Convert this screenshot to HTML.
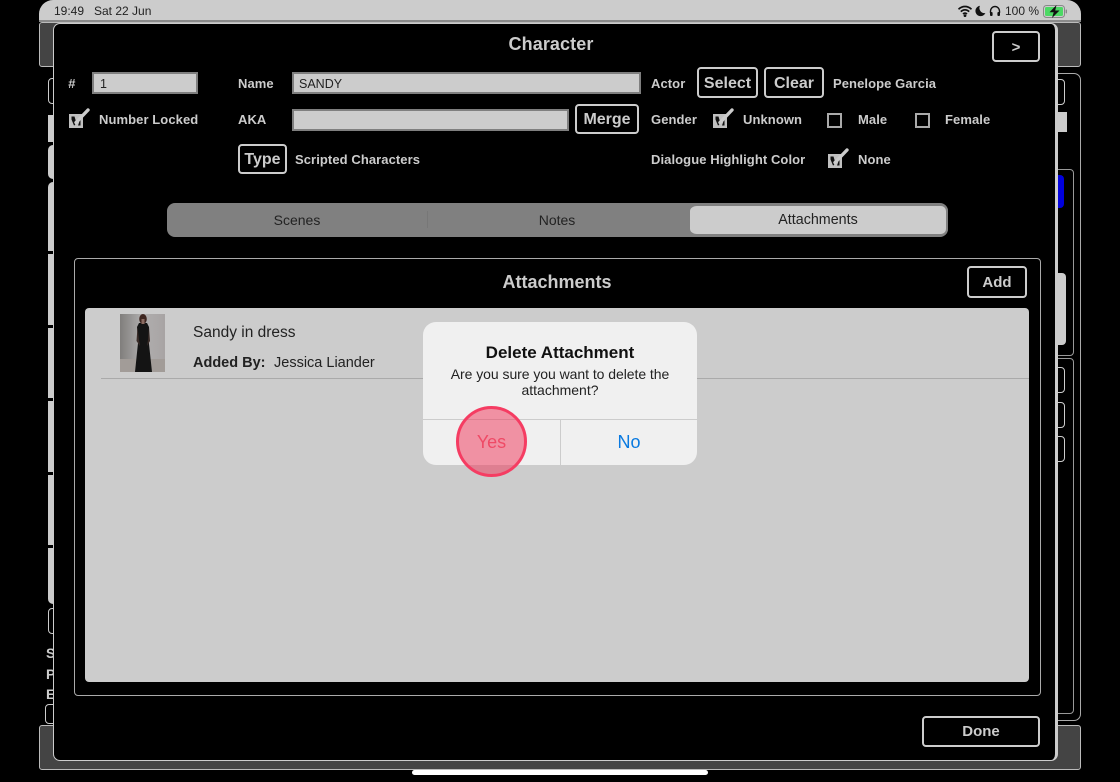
<!DOCTYPE html>
<html>
<head>
<meta charset="utf-8">
<style>
html,body{margin:0;padding:0;background:#000;}
body{width:1120px;height:782px;position:relative;overflow:hidden;font-family:"Liberation Sans",sans-serif;color:#ccc;}
.a{position:absolute;box-sizing:border-box;}
.t{position:absolute;white-space:nowrap;line-height:1;}
.b{font-weight:bold;font-size:13px;color:#ccc;letter-spacing:.08px;}
.btn{position:absolute;box-sizing:border-box;border:2px solid #ccc;border-radius:4px;background:#000;color:#ccc;font-weight:bold;font-size:16px;text-align:center;}
.inp{position:absolute;box-sizing:border-box;background:#ccc;border:2px solid #7f7f7f;color:#222;font-size:12.5px;line-height:20px;padding-left:5px;}
.chk{position:absolute;width:23px;height:23px;}
.box{position:absolute;box-sizing:border-box;width:15px;height:15px;border:2.5px solid #aaa;background:#000;}
</style>
</head>
<body>
<!-- status bar -->
<div class="a" style="left:39px;top:0;width:1042px;height:20px;background:#ccc;border-radius:14px 14px 0 0;"></div>
<div class="a" style="left:39px;top:20px;width:1042px;height:2px;background:#8a8a8a;"></div>
<div class="t" style="left:54px;top:5px;font-size:12px;color:#222;">19:49</div>
<div class="t" style="left:94px;top:5px;font-size:12px;color:#222;">Sat 22 Jun</div>
<svg class="a" style="left:957px;top:4px;" width="16" height="14" viewBox="0 0 16 14"><path d="M1.5 5.2C5.5 1.6 10.5 1.6 14.5 5.2M3.8 7.6C6.4 5.3 9.6 5.3 12.2 7.6M6 10C7.2 9 8.8 9 10 10" stroke="#111" stroke-width="1.7" fill="none"/><circle cx="8" cy="11.6" r="1.4" fill="#111"/></svg>
<svg class="a" style="left:975px;top:5px;" width="11" height="12" viewBox="0 0 11 12"><path d="M5 .8A5.2 5.2 0 1 0 10.400 8 5 5 0 0 1 5 .8Z" fill="#111"/></svg>
<svg class="a" style="left:989px;top:5px;" width="12" height="12" viewBox="0 0 12 12"><path d="M1.500 8V6a4.500 4.500 0 0 1 9 0v2" stroke="#111" stroke-width="1.400" fill="none"/><rect x="1" y="7" width="2.600" height="4" rx="1" fill="#111"/><rect x="8.400" y="7" width="2.600" height="4" rx="1" fill="#111"/></svg>
<div class="t" style="left:1005px;top:5px;font-size:12px;color:#222;">100 %</div>
<svg class="a" style="left:1043px;top:5px;" width="25" height="13" viewBox="0 0 25 13"><rect x=".5" y=".5" width="21" height="12" rx="3" fill="none" stroke="#888"/><rect x="2" y="2" width="18" height="9" rx="1.500" fill="#4cd964"/><rect x="22.600" y="4.500" width="1.400" height="4" rx=".7" fill="#888"/><path d="M13.500 0 6.500 7.300h4.200L9 13l7.500-7.500h-4.300z" fill="#111"/></svg>

<!-- background layer -->
<div class="a" style="left:39px;top:22px;width:1042px;height:45px;background:#444;border:1.5px solid #bbb;border-radius:3px;"></div>
<div class="a" style="left:39px;top:725px;width:1042px;height:45px;background:#444;border:1.5px solid #bbb;border-radius:3px;"></div>
<div class="a" style="left:48px;top:78px;width:14px;height:26px;border:1.5px solid #ccc;border-radius:4px;"></div>
<div class="a" style="left:48px;top:115px;width:10px;height:27px;background:#ccc;"></div>
<div class="a" style="left:48px;top:145px;width:10px;height:34px;background:#ccc;border-radius:5px;"></div>
<div class="a" style="left:48px;top:182px;width:10px;height:422px;background:#ccc;border-radius:5px;"></div>
<div class="a" style="left:48px;top:251px;width:5px;height:3px;background:#000;"></div>
<div class="a" style="left:48px;top:325px;width:5px;height:3px;background:#000;"></div>
<div class="a" style="left:48px;top:398px;width:5px;height:3px;background:#000;"></div>
<div class="a" style="left:48px;top:472px;width:5px;height:3px;background:#000;"></div>
<div class="a" style="left:48px;top:545px;width:5px;height:3px;background:#000;"></div>
<div class="a" style="left:48px;top:608px;width:14px;height:26px;border:1.5px solid #ccc;border-radius:4px;"></div>
<div class="t" style="left:46px;top:646px;font-size:14px;font-weight:bold;">S</div>
<div class="t" style="left:46px;top:667px;font-size:14px;font-weight:bold;">P</div>
<div class="t" style="left:46px;top:687px;font-size:14px;font-weight:bold;">E</div>
<div class="a" style="left:45px;top:704px;width:16px;height:20px;border:1.5px solid #ccc;border-radius:4px;"></div>
<!-- right back -->
<div class="a" style="left:1040px;top:73px;width:41px;height:648px;border:1.5px solid #aaa;border-radius:7px;"></div>
<div class="a" style="left:1040px;top:79px;width:25px;height:26px;border:1.5px solid #ccc;border-radius:4px;"></div>
<div class="a" style="left:1050px;top:112px;width:17px;height:20px;background:#ccc;"></div>
<div class="a" style="left:1040px;top:169px;width:34px;height:187px;border:1px solid #999;border-radius:4px;"></div>
<div class="a" style="left:1050px;top:175px;width:14px;height:33px;background:#00d;border-radius:4px;"></div>
<div class="a" style="left:1050px;top:273px;width:16px;height:72px;background:#ccc;border-radius:4px;"></div>
<div class="a" style="left:1040px;top:358px;width:34px;height:356px;border:1px solid #999;border-radius:4px;"></div>
<div class="a" style="left:1040px;top:367px;width:25px;height:26px;border:1.5px solid #ccc;border-radius:4px;"></div>
<div class="a" style="left:1040px;top:402px;width:25px;height:26px;border:1.5px solid #ccc;border-radius:4px;"></div>
<div class="a" style="left:1040px;top:436px;width:25px;height:26px;border:1.5px solid #ccc;border-radius:4px;"></div>

<!-- main modal -->
<div class="a" style="left:53px;top:23px;width:1005px;height:738px;background:#000;border:1.5px solid #ccc;border-right-width:3px;border-radius:7px;"></div>
<div class="t" style="left:0;top:35px;width:1102px;text-align:center;font-size:18px;font-weight:bold;color:#ccc;letter-spacing:.1px;">Character</div>
<div class="btn" style="left:992px;top:31px;width:48px;height:31px;line-height:29px;font-size:15px;">&gt;</div>

<!-- row 1 -->
<div class="t" style="left:68px;top:77px;font-size:13px;font-weight:bold;font-style:italic;">#</div>
<div class="inp" style="left:92px;top:72px;width:106px;height:22px;padding-left:6px;">1</div>
<div class="t b" style="left:238px;top:77px;">Name</div>
<div class="inp" style="left:292px;top:72px;width:349px;height:22px;padding-left:5px;">SANDY</div>
<div class="t b" style="left:651px;top:77px;">Actor</div>
<div class="btn" style="left:697px;top:67px;width:61px;height:31px;line-height:29px;">Select</div>
<div class="btn" style="left:764px;top:67px;width:60px;height:31px;line-height:29px;">Clear</div>
<div class="t b" style="left:833px;top:77px;">Penelope Garcia</div>

<!-- row 2 -->
<svg class="chk" style="left:68px;top:107px;" viewBox="0 0 23 23"><rect x="1" y="7" width="14" height="14" fill="#c0c0c0"/><path d="M3.500 9.500h3l1.500 5-1 3.500-1 .5-2.500-6zM10 18.500l2.500-7v7z" fill="#111"/><path d="M8 15.500 20 3" stroke="#ccc" stroke-width="3.400" stroke-linecap="round" fill="none"/></svg>
<div class="t b" style="left:99px;top:113px;">Number Locked</div>
<div class="t b" style="left:238px;top:113px;">AKA</div>
<div class="inp" style="left:292px;top:109px;width:277px;height:22px;"></div>
<div class="btn" style="left:575px;top:104px;width:64px;height:30px;line-height:28px;">Merge</div>
<div class="t b" style="left:651px;top:113px;">Gender</div>
<svg class="chk" style="left:712px;top:107px;" viewBox="0 0 23 23"><rect x="1" y="7" width="14" height="14" fill="#c0c0c0"/><path d="M3.500 9.500h3l1.500 5-1 3.500-1 .5-2.500-6zM10 18.500l2.500-7v7z" fill="#111"/><path d="M8 15.500 20 3" stroke="#ccc" stroke-width="3.400" stroke-linecap="round" fill="none"/></svg>
<div class="t b" style="left:743px;top:113px;">Unknown</div>
<div class="box" style="left:827px;top:113px;"></div>
<div class="t b" style="left:858px;top:113px;">Male</div>
<div class="box" style="left:915px;top:113px;"></div>
<div class="t b" style="left:945px;top:113px;">Female</div>

<!-- row 3 -->
<div class="btn" style="left:238px;top:144px;width:49px;height:30px;line-height:28px;">Type</div>
<div class="t b" style="left:295px;top:153px;">Scripted Characters</div>
<div class="t b" style="left:651px;top:153px;">Dialogue Highlight Color</div>
<svg class="chk" style="left:827px;top:147px;" viewBox="0 0 23 23"><rect x="1" y="7" width="14" height="14" fill="#c0c0c0"/><path d="M3.500 9.500h3l1.500 5-1 3.500-1 .5-2.500-6zM10 18.500l2.500-7v7z" fill="#111"/><path d="M8 15.500 20 3" stroke="#ccc" stroke-width="3.400" stroke-linecap="round" fill="none"/></svg>
<div class="t b" style="left:858px;top:153px;">None</div>

<!-- segmented -->
<div class="a" style="left:167px;top:203px;width:781px;height:34px;background:#808080;border-radius:8px;"></div>
<div class="a" style="left:427px;top:211px;width:1px;height:17px;background:#777;"></div>
<div class="a" style="left:690px;top:204px;width:258px;height:32px;background:#ccc;border:2px solid #808080;border-left:0;border-radius:7px;"></div>
<div class="t" style="left:167px;top:213px;width:260px;text-align:center;font-size:14px;line-height:14px;color:#222;">Scenes</div>
<div class="t" style="left:428px;top:213px;width:258px;text-align:center;font-size:14px;line-height:14px;color:#222;">Notes</div>
<div class="t" style="left:689px;top:213px;width:258px;text-align:center;font-size:14.300px;line-height:14px;color:#222;">Attachments</div>

<!-- attachments panel -->
<div class="a" style="left:74px;top:258px;width:967px;height:438px;border:1px solid #aaa;border-radius:4px;"></div>
<div class="t" style="left:74px;top:273px;width:966px;text-align:center;font-size:18px;font-weight:bold;color:#ccc;">Attachments</div>
<div class="btn" style="left:967px;top:266px;width:60px;height:32px;line-height:29px;font-size:15px;">Add</div>
<div class="a" style="left:85px;top:308px;width:944px;height:374px;background:#ccc;border-radius:4px;"></div>
<svg class="a" style="left:120px;top:314px;" width="45" height="58" viewBox="0 0 45 58">
<defs><linearGradient id="bg" x1="0" y1="0" x2="1" y2="0"><stop offset="0" stop-color="#807e7c"/><stop offset=".5" stop-color="#b0aeae"/><stop offset="1" stop-color="#a8a4a4"/></linearGradient></defs>
<rect width="45" height="58" fill="url(#bg)"/><rect y="45" width="45" height="13" fill="#a29c98"/>
<path d="M19 9 17 13 18 29 15 58H32L29 30 29 13 27 9Z" fill="#141414"/>
<path d="M17.500 13 16.500 27 20 32 19 26ZM29 13 30 27 27 32 28 26Z" fill="#3a2c28"/>
<ellipse cx="23" cy="5" rx="3.800" ry="5" fill="#3e2620"/><rect x="21.500" y="5" width="3" height="5" fill="#8a6a60"/>
</svg>
<div class="t" style="left:193px;top:325px;font-size:15.500px;color:#222;">Sandy in dress</div>
<div class="t" style="left:193px;top:356px;font-size:14.500px;font-weight:bold;color:#222;">Added By:</div>
<div class="t" style="left:274px;top:356px;font-size:14.500px;color:#222;">Jessica Liander</div>
<div class="a" style="left:101px;top:378px;width:928px;height:1px;background:#aaa;"></div>

<!-- done -->
<div class="btn" style="left:922px;top:716px;width:118px;height:31px;line-height:28px;font-size:15px;">Done</div>

<!-- alert -->
<div class="a" style="left:423px;top:322px;width:274px;height:143px;background:#f0f0f0;border-radius:13px;"></div>
<div class="t" style="left:423px;top:344px;width:274px;text-align:center;font-size:17px;font-weight:bold;color:#111;">Delete Attachment</div>
<div class="t" style="left:423px;top:367px;width:274px;text-align:center;font-size:14px;letter-spacing:-.05px;color:#222;">Are you sure you want to delete the</div>
<div class="t" style="left:423px;top:383px;width:274px;text-align:center;font-size:14px;color:#222;">attachment?</div>
<div class="a" style="left:423px;top:419px;width:274px;height:1px;background:#ccc;"></div>
<div class="a" style="left:560px;top:420px;width:1px;height:45px;background:#ccc;"></div>
<div class="t" style="left:561px;top:433px;width:136px;text-align:center;font-size:18px;color:#0a7ae0;">No</div>
<div class="a" style="left:456px;top:406px;width:71px;height:71px;border-radius:50%;background:rgba(240,50,85,.5);border:3px solid #f53c62;"></div>
<div class="t" style="left:423px;top:433px;width:137px;text-align:center;font-size:18px;color:#ef4a66;">Yes</div>

<!-- home indicator -->
<div class="a" style="left:412px;top:770px;width:296px;height:5px;background:#fff;border-radius:3px;"></div>
</body>
</html>
